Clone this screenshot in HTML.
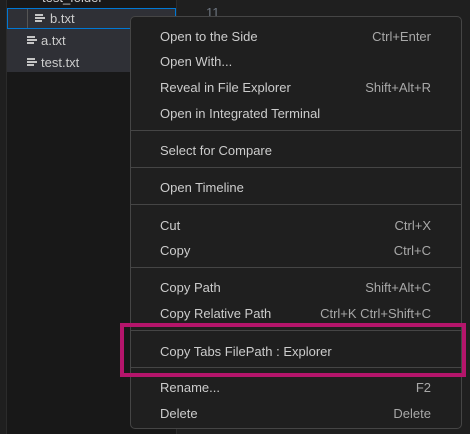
<!DOCTYPE html><html><head><style>
body{margin:0;width:470px;height:434px;background:#1f1f1f;position:relative;overflow:hidden;font-family:"Liberation Sans",sans-serif;}
.a{position:absolute}
.t{position:absolute;left:160px;font-size:13px;color:#cccccc;line-height:16px}
.s{position:absolute;right:39px;font-size:13px;color:#a8a8a8;line-height:16px}
.sep{position:absolute;left:131px;width:330px;height:1px;background:#454545}
.ic{position:absolute;width:10px;height:10px}
.ic i{display:block;height:2px;background:#c5c5c5;margin-bottom:1px}
</style></head><body>
<div class="a" style="left:0;top:0;width:7px;height:434px;background:#1f1f1f"></div>
<div class="a" style="left:6px;top:0;width:1px;height:434px;background:#2b2b2b"></div>
<div class="a" style="left:7px;top:0;width:169px;height:434px;background:#181818"></div>
<div class="a" style="left:176px;top:0;width:1px;height:434px;background:#2b2b2b"></div>
<div class="a" style="left:42px;top:-10px;font-size:13px;color:#cccccc">test_folder</div>
<div class="a" style="left:7px;top:28px;width:169px;height:44px;background:#2f3036"></div>
<div class="a" style="left:7px;top:8px;width:167px;height:19px;border:1px solid #0078d4;background:#2f3036"></div>
<div class="a" style="left:27px;top:9px;width:1px;height:19px;background:#555"></div>
<div class="ic" style="left:35px;top:14px"><i style="width:8px"></i><i style="width:10px"></i><i style="width:7px"></i></div>
<div class="a" style="left:50px;top:11px;font-size:13px;color:#cccccc">b.txt</div>
<div class="ic" style="left:27px;top:36px"><i style="width:8px"></i><i style="width:10px"></i><i style="width:7px"></i></div>
<div class="a" style="left:41px;top:33px;font-size:13px;color:#cccccc">a.txt</div>
<div class="ic" style="left:27px;top:58px"><i style="width:8px"></i><i style="width:10px"></i><i style="width:7px"></i></div>
<div class="a" style="left:41px;top:55px;font-size:13px;color:#cccccc">test.txt</div>
<div class="a" style="left:206px;top:5px;font-size:13px;color:#6e7681">11</div>
<div class="a" style="left:130px;top:16px;width:330px;height:411px;background:#1f1f1f;border:1px solid #454545;border-radius:5px"></div>
<div class="t" style="top:29px">Open to the Side</div><div class="s" style="top:29px">Ctrl+Enter</div>
<div class="t" style="top:54px">Open With...</div>
<div class="t" style="top:80px">Reveal in File Explorer</div><div class="s" style="top:80px">Shift+Alt+R</div>
<div class="t" style="top:106px">Open in Integrated Terminal</div>
<div class="sep" style="top:130px"></div>
<div class="t" style="top:143px">Select for Compare</div>
<div class="sep" style="top:167px"></div>
<div class="t" style="top:180px">Open Timeline</div>
<div class="sep" style="top:204px"></div>
<div class="t" style="top:218px">Cut</div><div class="s" style="top:218px">Ctrl+X</div>
<div class="t" style="top:243px">Copy</div><div class="s" style="top:243px">Ctrl+C</div>
<div class="sep" style="top:267px"></div>
<div class="t" style="top:280px">Copy Path</div><div class="s" style="top:280px">Shift+Alt+C</div>
<div class="t" style="top:306px">Copy Relative Path</div><div class="s" style="top:306px">Ctrl+K Ctrl+Shift+C</div>
<div class="sep" style="top:330px"></div>
<div class="t" style="top:344px">Copy Tabs FilePath : Explorer</div>
<div class="sep" style="top:367px"></div>
<div class="t" style="top:380px">Rename...</div><div class="s" style="top:380px">F2</div>
<div class="t" style="top:406px">Delete</div><div class="s" style="top:406px">Delete</div>
<div class="a" style="left:120px;top:323px;width:338px;height:46px;border:4px solid #b5156b"></div>
</body></html>
